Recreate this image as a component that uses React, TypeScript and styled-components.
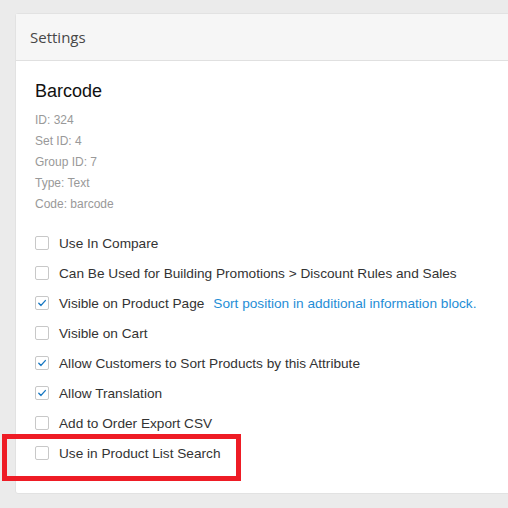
import React from "react";
import styled, { createGlobalStyle } from "styled-components";

const Global = createGlobalStyle`
  html, body { margin: 0; padding: 0; }
  body {
    background: #ebebeb;
    width: 508px;
    height: 508px;
    overflow: hidden;
    font-family: "Liberation Sans", Arial, sans-serif;
  }
`;

const Page = styled.div`
  position: relative;
  padding: 14px 0 0 15px;
  width: 508px;
  height: 508px;
  box-sizing: border-box;
  overflow: hidden;
`;

const Card = styled.section`
  width: 540px;
  background: #ffffff;
  border: 1px solid #e2e2e2;
  border-radius: 3px;
  box-sizing: border-box;
  margin-top: -1px;
`;

const Header = styled.header`
  height: 47px;
  display: flex;
  align-items: center;
  padding-left: 14px;
  background: #f6f6f6;
  border-bottom: 1px solid #e0e0e0;
  box-sizing: border-box;
  font-family: "Open Sans", "Liberation Sans", sans-serif;
  font-size: 15px;
  color: #474747;
`;

const Body = styled.div`
  padding: 19px 0 25px 19px;
`;

const Title = styled.h2`
  margin: 0 0 8px;
  font-size: 18px;
  line-height: 22px;
  font-weight: 400;
  color: #111;
`;

const Meta = styled.div`
  font-size: 12px;
  line-height: 21px;
  color: #999;
`;

const List = styled.ul`
  list-style: none;
  margin: 13px 0 0;
  padding: 0;
`;

const Row = styled.li`
  height: 30px;
  display: flex;
  align-items: center;
  font-size: 13.65px;
  color: #333;
`;

const Box = styled.span`
  width: 14px;
  height: 14px;
  box-sizing: border-box;
  border: 1px solid #c8c8c8;
  border-radius: 2px;
  background: #fff;
  margin-right: 10px;
  display: flex;
  align-items: center;
  justify-content: center;
  flex: none;
`;

const Link = styled.a`
  color: #1f8ed6;
  margin-left: 9px;
  text-decoration: none;
`;

const Highlight = styled.div`
  position: absolute;
  left: 2px;
  top: 434px;
  width: 239px;
  height: 47px;
  border: 5px solid #ee1c25;
  box-sizing: border-box;
  pointer-events: none;
`;

const Check = () => (
  <svg width="10" height="10" viewBox="0 0 10 10">
    <polyline
      points="1.8,5.2 4,7.4 8.3,2.6"
      fill="none"
      stroke="#1979c3"
      strokeWidth="1.4"
      strokeLinecap="round"
      strokeLinejoin="round"
    />
  </svg>
);

const items: { label: string; checked: boolean; link?: string }[] = [
  { label: "Use In Compare", checked: false },
  { label: "Can Be Used for Building Promotions > Discount Rules and Sales", checked: false },
  { label: "Visible on Product Page", checked: true, link: "Sort position in additional information block." },
  { label: "Visible on Cart", checked: false },
  { label: "Allow Customers to Sort Products by this Attribute", checked: true },
  { label: "Allow Translation", checked: true },
  { label: "Add to Order Export CSV", checked: false },
  { label: "Use in Product List Search", checked: false },
];

export default function App() {
  return (
    <>
      <Global />
      <Page>
        <Card>
          <Header>Settings</Header>
          <Body>
            <Title>Barcode</Title>
            <Meta>ID: 324</Meta>
            <Meta>Set ID: 4</Meta>
            <Meta>Group ID: 7</Meta>
            <Meta>Type: Text</Meta>
            <Meta>Code: barcode</Meta>
            <List>
              {items.map((it) => (
                <Row key={it.label}>
                  <Box>{it.checked && <Check />}</Box>
                  <span>{it.label}</span>
                  {it.link && <Link href="#">{it.link}</Link>}
                </Row>
              ))}
            </List>
          </Body>
        </Card>
        <Highlight />
      </Page>
    </>
  );
}
